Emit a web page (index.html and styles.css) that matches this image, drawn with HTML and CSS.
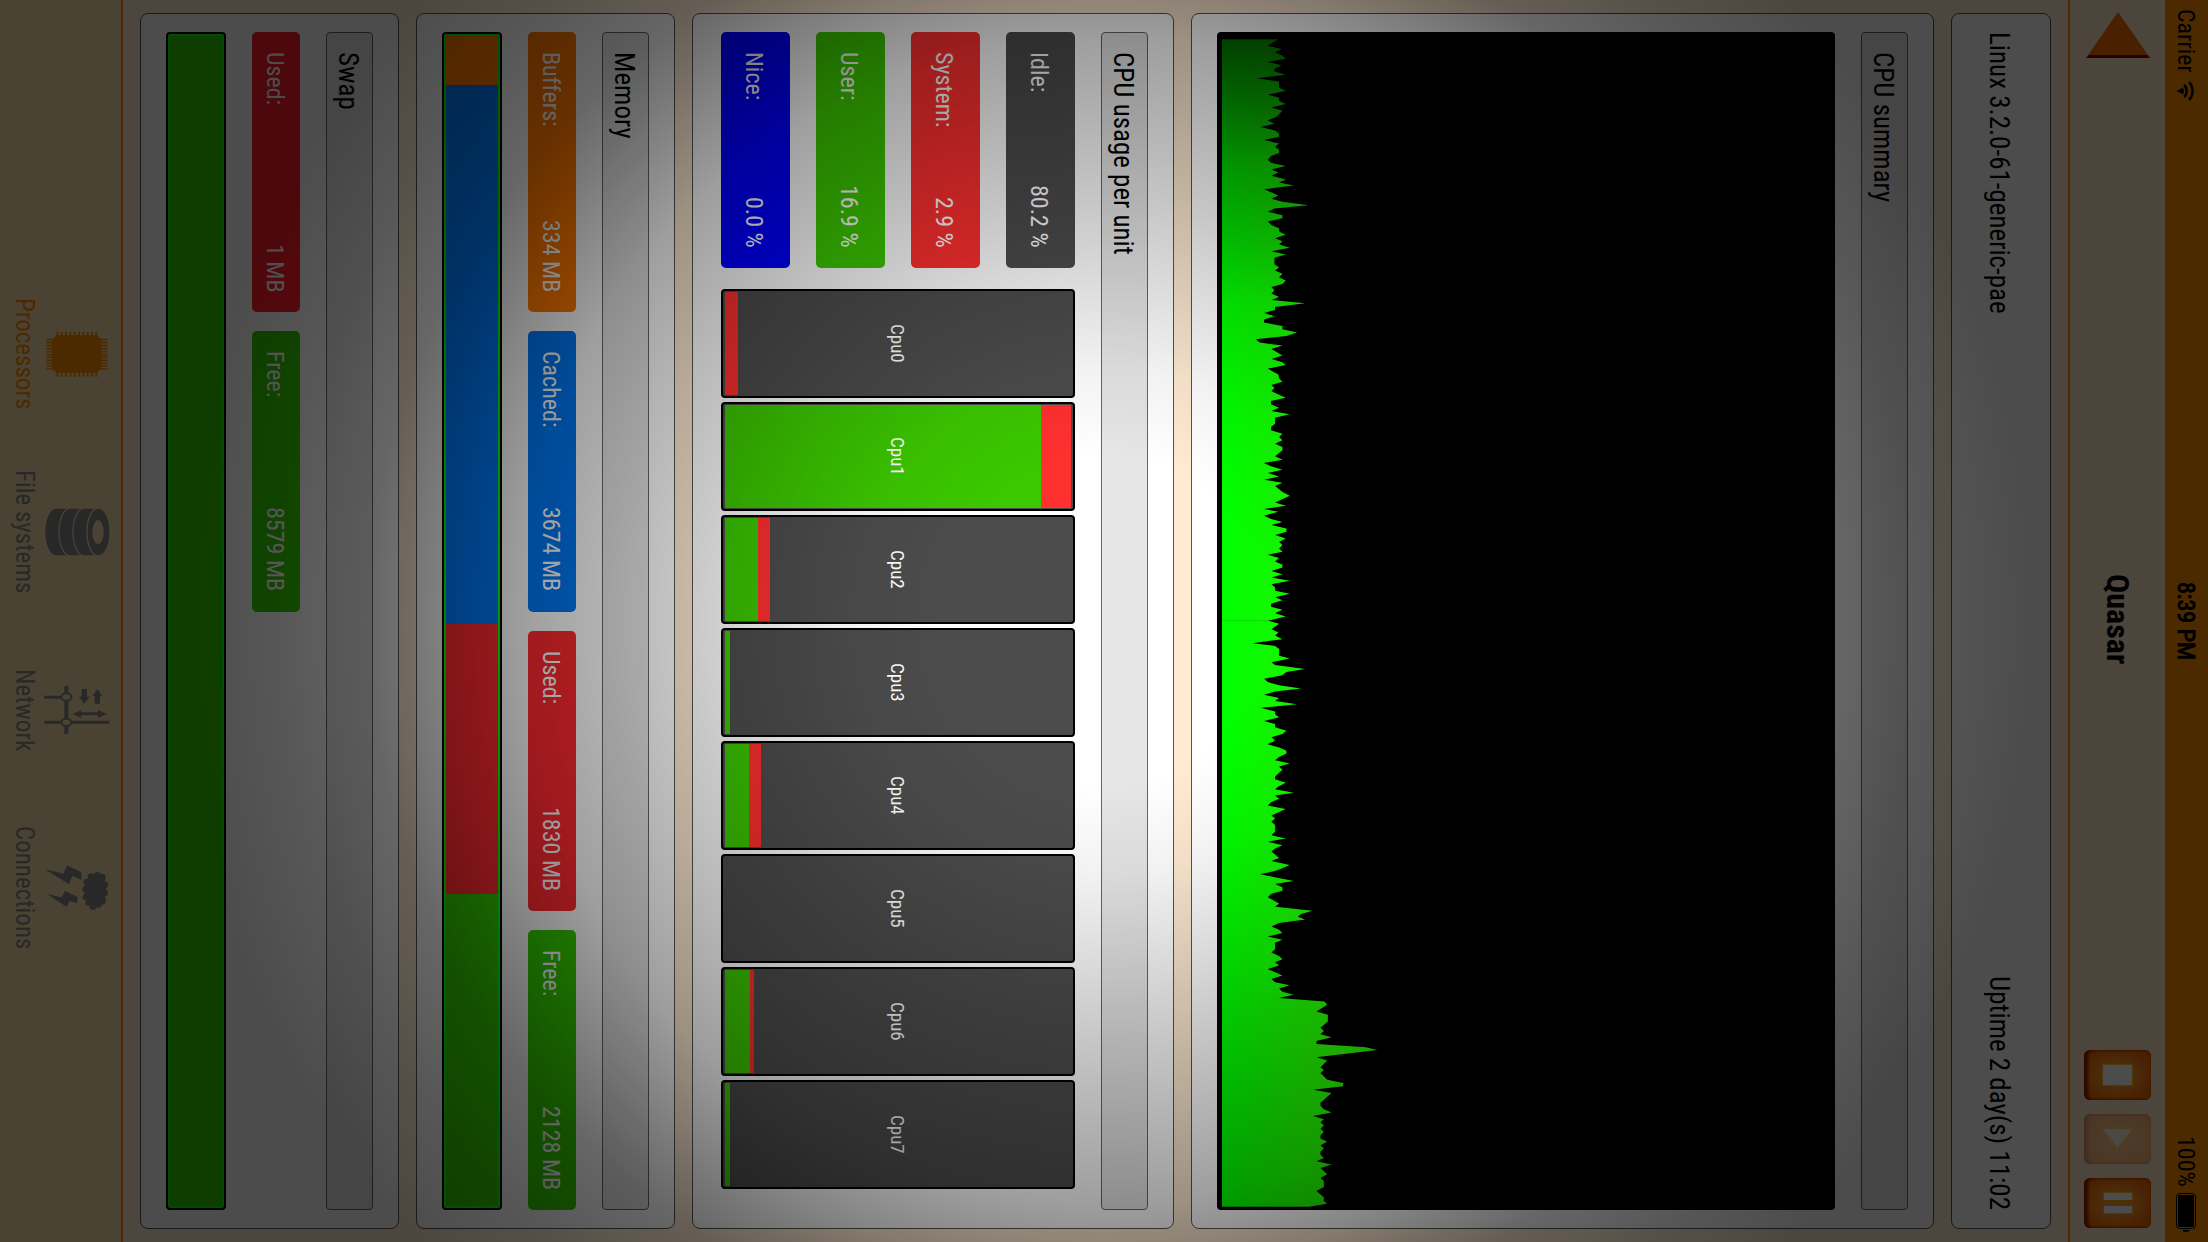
FILE: index.html
```html
<!DOCTYPE html>
<html lang="en">
<head>
<meta charset="utf-8">
<title>Quasar</title>
<link rel="stylesheet" href="styles.css">
</head>
<body>
<header class="statusbar">
  <div class="carrier">
    <span>Carrier</span>
    <svg class="wifi" viewBox="0 0 60 50" preserveAspectRatio="none" aria-hidden="true">
      <path d="M2 25 L20 17 A10 10 0 0 1 20 33 Z" fill="#000"/>
      <path d="M24 10 A18 18 0 0 1 24 40" fill="none" stroke="#000" stroke-width="7"/>
      <path d="M39 3 A28 28 0 0 1 39 47" fill="none" stroke="#000" stroke-width="7"/>
    </svg>
  </div>
  <time class="clock">8:39 PM</time>
  <div class="power">
    <span>100%</span>
    <svg class="battery" viewBox="0 0 20 40" aria-hidden="true">
      <rect x="0.5" y="0.5" width="19" height="35" rx="3" fill="none" stroke="#000"/>
      <rect x="2" y="2" width="16" height="32" rx="1"/>
      <path d="M6 37h8q-1 2-4 2t-4-2z"/>
    </svg>
  </div>
</header>

<nav class="navbar">
  <button class="back" type="button" aria-label="Back">
    <svg viewBox="0 0 66 48" aria-hidden="true">
      <path d="M33 1 65 47H1z" fill="#f06a00"/>
      <path d="M33 5 59 44H7z" fill="#f97000"/>
      <path d="M1 47 4 44H62l3 3z" fill="#6b1000"/>
    </svg>
  </button>
  <h1 class="title">Quasar</h1>
  <div class="actions">
    <button class="action" type="button" aria-label="Stop">
      <svg viewBox="0 0 66 49" aria-hidden="true"><path d="M18 14H48V35H18z"/></svg>
    </button>
    <button class="action" type="button" aria-label="Play" disabled>
      <svg viewBox="0 0 66 49" aria-hidden="true"><path d="M17 14H49L33 35z"/></svg>
    </button>
    <button class="action" type="button" aria-label="Pause">
      <svg viewBox="0 0 66 49" aria-hidden="true"><path d="M19 14H48V22H19zM19 27H48V35H19z"/></svg>
    </button>
  </div>
</nav>

<main class="content">
  <section class="panel info">
    <span>Linux 3.2.0-61-generic-pae</span>
    <span>Uptime 2 day(s) 11:02</span>
  </section>

  <section class="panel summary">
    <h2>CPU summary</h2>
    <div class="chart">
      <svg viewBox="54 96 1851 3531" preserveAspectRatio="none" role="img" aria-label="CPU load history">
        <defs>
          <linearGradient id="load" gradientUnits="userSpaceOnUse" x1="69" y1="0" x2="400" y2="0">
            <stop offset="0" stop-color="#00ff00"/>
            <stop offset="1" stop-color="#28f000"/>
          </linearGradient>
          <linearGradient id="fade" gradientUnits="userSpaceOnUse" x1="0" y1="96" x2="0" y2="900">
            <stop offset="0" stop-color="#000" stop-opacity="0.6"/>
            <stop offset="0.5" stop-color="#000" stop-opacity="0.2"/>
            <stop offset="1" stop-color="#000" stop-opacity="0"/>
          </linearGradient>
        </defs>
        <g fill="url(#load)">
          <polygon points="69,118 238,118 206,137 248,147 228,157 250,167 260,176 206,186 248,196 226,206 226,214 260,224 172,235 240,244 240,263 260,272 206,284 240,293 240,303 260,312 217,322 250,332 232,350 206,361 226,371 184,381 228,391 240,401 240,410 195,420 240,430 228,440 240,450 240,459 216,468 206,478 216,488 260,498 217,508 238,517 217,527 260,538 240,547 284,556 195,567 238,586 217,596 250,605 328,615 226,625 206,635 250,645 250,654 206,664 218,675 240,684 240,694 260,704 228,714 250,723 240,733 272,743 217,753 260,763 226,773 226,792 240,802 228,811 250,821 240,831 260,841 250,851 217,860 226,870 217,880 240,890 217,899 318,909 228,920 228,929 195,938 226,948 195,958 195,967 250,977 250,987 294,997 262,1007 170,1017 182,1027 250,1036 217,1046 250,1066 217,1076 250,1086 260,1094 206,1105 238,1123 240,1134 250,1144 217,1154 226,1163 217,1173 260,1192 216,1202 216,1212 240,1222 217,1232 272,1242 228,1252 228,1270 216,1280 216,1290 250,1300 240,1310 250,1320 228,1330 250,1340 250,1350 228,1368 250,1378 194,1388 216,1398 250,1408 206,1418 240,1428 195,1438 250,1447 228,1457 250,1475 272,1486 228,1506 260,1516 195,1526 238,1534 195,1546 216,1556 250,1565 217,1574 262,1584 262,1594 228,1604 260,1614 240,1624 250,1634 240,1644 250,1654 206,1663 240,1673 228,1683 250,1693 250,1701 217,1712 250,1721 217,1731 272,1741 217,1751 228,1761 228,1771 272,1780 228,1790 250,1799 216,1810 216,1819 250,1828 228,1838 260,1848 206,1861 69,1861"/>
          <polygon transform="translate(0 1860) scale(1 1.19)" points="69,0 206,0 240,8 217,22 238,30 228,38 250,47 160,57 228,64 240,72 240,89 272,96 217,105 228,112 318,122 262,130 250,138 195,147 206,155 240,163 306,171 228,179 195,187 240,195 228,203 294,211 184,220 228,229 228,236 240,244 195,253 228,261 228,269 262,278 250,286 217,294 228,302 206,312 240,320 262,328 262,335 240,344 228,352 272,360 240,368 250,376 228,393 228,400 260,409 238,418 228,425 284,434 228,441 240,449 216,458 206,466 260,475 217,491 228,499 217,507 228,515 228,532 217,541 260,549 206,557 250,566 228,574 217,582 240,598 217,606 272,616 250,624 228,631 182,639 284,656 228,664 250,672 250,681 217,688 206,697 240,713 228,721 340,731 306,739 296,746 318,753 240,762 217,771 240,779 250,787 206,796 250,804 228,812 228,828 217,836 240,845 250,853 228,861 240,869 206,878 250,894 217,903 228,911 272,919 240,927 250,935 284,943 240,951 376,960 384,968 352,985 386,993 386,1010 364,1026 374,1034 364,1042 397,1050 352,1059 352,1067 500,1075 534,1082 352,1100 384,1108 364,1125 374,1132 364,1140 384,1157 432,1165 432,1173 342,1182 397,1190 364,1215 364,1222 374,1231 397,1239 342,1248 374,1256 364,1264 374,1272 364,1280 374,1288 364,1297 364,1305 384,1313 364,1322 374,1330 364,1338 364,1346 374,1354 352,1362 397,1370 364,1379 384,1395 364,1404 374,1412 374,1427 352,1437 374,1453 374,1462 384,1469 330,1477 69,1477"/>
        </g>
        <rect x="69" y="96" width="400" height="804" fill="url(#fade)"/>
      </svg>
    </div>
  </section>

  <section class="panel usage">
    <h2>CPU usage per unit</h2>
    <div class="units">
      <dl class="legend">
        <div class="badge idle"><dt>Idle:</dt><dd>80.2 %</dd></div>
        <div class="badge system"><dt>System:</dt><dd>2.9 %</dd></div>
        <div class="badge user"><dt>User:</dt><dd>16.9 %</dd></div>
        <div class="badge nice"><dt>Nice:</dt><dd>0.0 %</dd></div>
      </dl>
      <div class="cpus">
        <div class="cpu"><i class="system" style="width:3.9%"></i><span>Cpu0</span></div>
        <div class="cpu"><i class="user" style="width:91.3%"></i><i class="system" style="width:8.7%"></i><span>Cpu1</span></div>
        <div class="cpu"><i class="user" style="width:9.6%"></i><i class="system" style="width:3.4%"></i><span>Cpu2</span></div>
        <div class="cpu"><i class="user" style="width:1.4%"></i><span>Cpu3</span></div>
        <div class="cpu"><i class="user" style="width:6.9%"></i><i class="system" style="width:3.5%"></i><span>Cpu4</span></div>
        <div class="cpu"><span>Cpu5</span></div>
        <div class="cpu"><i class="user" style="width:7.3%"></i><i class="system" style="width:1%"></i><span>Cpu6</span></div>
        <div class="cpu"><i class="user" style="width:1.4%"></i><span>Cpu7</span></div>
      </div>
    </div>
  </section>

  <section class="panel memory">
    <h2>Memory</h2>
    <dl class="badges">
      <div class="badge buffers"><dt>Buffers:</dt><dd>334 MB</dd></div>
      <div class="badge cached"><dt>Cached:</dt><dd>3674 MB</dd></div>
      <div class="badge used"><dt>Used:</dt><dd>1830 MB</dd></div>
      <div class="badge free"><dt>Free:</dt><dd>2128 MB</dd></div>
    </dl>
    <div class="bar">
      <i class="buffers" style="height:4.2%"></i>
      <i class="cached" style="height:46.1%"></i>
      <i class="used" style="height:23%"></i>
      <i class="free" style="height:26.7%"></i>
    </div>
  </section>

  <section class="panel swap">
    <h2>Swap</h2>
    <dl class="badges">
      <div class="badge used"><dt>Used:</dt><dd>1 MB</dd></div>
      <div class="badge free"><dt>Free:</dt><dd>8579 MB</dd></div>
    </dl>
    <div class="bar">
      <i class="free" style="height:100%"></i>
    </div>
  </section>
</main>

<nav class="tabbar">
  <a class="tab active" href="#processors">
    <svg viewBox="131 238 198 144" aria-hidden="true">
      <path d="M168 254H290L303 267V353L290 366H168L155 353V267z"/>
      <path d="M171 243V378M184 243V378M197 243V378M210 243V378M223 243V378M236 243V378M249 243V378M262 243V378M275 243V378M288 243V378" fill="none" stroke="currentColor" stroke-width="6"/>
      <path d="M138 267H321M138 276H321M138 285H321M138 294H321M138 303H321M138 312H321M138 320H321M138 329H321M138 338H321M138 346H321M138 355H321" fill="none" stroke="currentColor" stroke-width="5"/>
    </svg>
    <span>Processors</span>
  </a>
  <a class="tab" href="#filesystems">
    <svg viewBox="131 775 198 144" aria-hidden="true">
      <path d="M168 777H294A33 70 0 0 1 294 917H168A33 70 0 0 1 168 777z"/>
      <g fill="none" stroke="#f8dca8" stroke-width="4">
        <path d="M208 776A32 71 0 0 0 208 918M250 776A32 71 0 0 0 250 918M292 776A32 71 0 0 0 292 918"/>
      </g>
      <ellipse cx="293" cy="847" rx="17" ry="36" fill="#f8dca8"/>
    </svg>
    <span>File systems</span>
  </a>
  <a class="tab" href="#network">
    <svg viewBox="131 258 198 144" aria-hidden="true">
      <path d="M132 292H198M132 367H327" fill="none" stroke="currentColor" stroke-width="9"/>
      <path d="M198 258V402" fill="none" stroke="currentColor" stroke-width="12"/>
      <g fill="#f8dca8" stroke="currentColor" stroke-width="6"><ellipse cx="198" cy="291" rx="15" ry="11"/><ellipse cx="198" cy="367" rx="15" ry="11"/></g>
      <path d="M244 267H260V290H268L252 311 236 290H244zM291 267 306 288H299V311H283V288H276zM217 342 243 330V337H293V330L320 342 293 354V346H243V354z"/>
    </svg>
    <span>Network</span>
  </a>
  <a class="tab" href="#connections">
    <svg viewBox="131 792 198 144" aria-hidden="true">
      <path d="M134 808 189 821 200 796 243 817V840L216 827 206 853zM141 883 184 892 194 873 231 890V909L208 903 198 920z"/>
      <g><ellipse cx="285" cy="872" rx="32" ry="46"/><circle cx="291" cy="826" r="10"/><circle cx="304" cy="833" r="12"/><circle cx="273" cy="831" r="11"/><circle cx="312" cy="854" r="11"/><circle cx="312" cy="878" r="11"/><circle cx="304" cy="901" r="13"/><circle cx="294" cy="912" r="11"/><circle cx="278" cy="919" r="11"/><circle cx="264" cy="908" r="9"/><circle cx="257" cy="891" r="10"/><circle cx="256" cy="868" r="10"/><circle cx="260" cy="847" r="11"/></g>
    </svg>
    <span>Connections</span>
  </a>
</nav>
<div class="vignette"></div>
</body>
</html>
```
FILE: styles.css
```css
*, *::before, *::after { box-sizing: border-box; }

/* The whole interface reads top to bottom, with blocks stacked from right to left. */
html {
  writing-mode: vertical-rl;
  height: 100%;
}

body {
  margin: 0;
  width: 100vw;
  height: 100vh;
  overflow: hidden;
  display: flex;
  flex-direction: column;
  background: #ffebd3;
  color: #000;
  font-family: "Liberation Sans Narrow", "Roboto Condensed", "Liberation Sans", sans-serif;
  font-size: 27px;
  line-height: 32px;
}

h1, h2, dl, dd { margin: 0; font-weight: 400; }
h2 { font-size: 27px; }
svg { display: block; }
i { display: block; }

button {
  appearance: none;
  border: 0;
  padding: 0;
  background: none;
}

.statusbar {
  width: 43px;
  flex: none;
  display: grid;
  grid-template-columns: 1fr auto 1fr;
  align-items: center;
  padding: 9px 1px 9px 0;
  background: #ff8c00;
  font-size: 24px;
}
.carrier { display: flex; align-items: center; gap: 8px; }
.clock { -webkit-text-stroke: 1px #000; }
.power { display: flex; align-items: center; justify-content: flex-end; gap: 6px; }
.wifi { width: 20px; height: 20px; }
.battery { width: 20px; height: 40px; }

.navbar {
  width: 97px;
  flex: none;
  display: grid;
  grid-template-columns: 1fr auto 1fr;
  align-items: center;
  padding: 11px 0 14px;
  border-left: 2px solid #ff8c00;
  background: #ffe6c8;
}
.back { justify-self: start; width: 66px; height: 48px; }
.title { font-size: 32px; font-weight: 700; }
.actions { display: flex; justify-content: flex-end; gap: 14px; }
.action {
  width: 67px;
  height: 50px;
  border-radius: 6px;
  background: radial-gradient(ellipse, #ff9a30 25%, #f06a00 80%);
  box-shadow: inset 4px 0 3px #8c1c00, inset 0 0 3px #b43c00;
}
.action svg { width: 100%; height: 100%; fill: #fff; stroke: #ffa800; stroke-width: 1; }
.action:disabled { opacity: 0.4; }
.action:disabled svg { stroke-width: 2; }

.content {
  flex: 1;
  min-width: 0;
  display: flex;
  flex-direction: column;
  gap: 17px;
  padding: 13px 17px;
}

.panel {
  flex: none;
  display: flex;
  flex-direction: column;
  gap: 26px;
  padding: 18px 25px;
  border: 1px solid #555;
  border-radius: 8px;
  background: #fff;
}
.info {
  width: 100px;
  flex-direction: row;
  justify-content: space-between;
  align-items: center;
  padding: 18px 27px 18px 23px;
}
.summary { flex: 1; min-width: 0; }

.panel h2 {
  width: 47px;
  padding: 19px 3px 19px 0;
  line-height: 42px;
  border: 1px solid #666;
  border-radius: 4px;
  background: #e6e6e6;
}

.chart {
  flex: 1;
  min-width: 0;
  border-radius: 4px;
  background: #000;
  overflow: hidden;
}
.chart svg { width: 100%; height: 100%; }

.usage { padding-left: 28px; }
.units { display: flex; gap: 21px; }
.legend { display: flex; flex-direction: column; gap: 26px; height: 236px; }
.badge {
  display: flex;
  flex: 1;
  justify-content: space-between;
  align-items: center;
  padding: 20px 3px 20px 0;
  border-radius: 5px;
  color: #fff;
  font-size: 24px;
}
.legend .badge { flex: none; width: 69px; }
.badges { display: grid; grid-template-columns: repeat(4, 1fr); gap: 19px; width: 48px; }

.idle { background: #4c4c4c; }
.system { background: #ff3030; }
.user { background: #3cc800; }
.nice { background: #0000ff; }
.buffers { background: #ff7800; }
.cached { background: #0078f5; }
.used { background: #ff2a30; }
.free { background: #32c800; }
.swap .used { background: #ff1c28; }

.cpus { flex: 1; display: flex; gap: 4px; padding-bottom: 21px; }
.cpu {
  position: relative;
  flex: 1;
  display: flex;
  flex-direction: column-reverse;
  justify-content: flex-start;
  padding: 1px 2px;
  border: 2px solid #000;
  border-radius: 4px;
  background: #4c4c4c;
}
.cpu span {
  position: absolute;
  inset: 0;
  display: flex;
  align-items: center;
  justify-content: center;
  padding-right: 3px;
  color: #fff;
  font-size: 19px;
}

.bar {
  width: 60px;
  display: flex;
  padding: 2px;
  border: 2px solid #000;
  border-radius: 4px;
  background: #00ff00;
}

.tabbar {
  width: 123px;
  flex: none;
  display: flex;
  justify-content: center;
  border-right: 2px solid #ff8c00;
  background: #f8dca8;
}
.tab {
  height: 178px;
  display: flex;
  flex-direction: column;
  align-items: center;
  gap: 4px;
  padding-right: 11px;
  color: #888;
  font-size: 25px;
  text-decoration: none;
}
.tab svg { width: 66px; height: 48px; fill: currentColor; }
.tab.active { color: #ff8c00; }

.vignette {
  position: fixed;
  inset: 0;
  pointer-events: none;
  background: radial-gradient(circle farthest-corner at center,
    rgba(0, 0, 0, 0) 13%,
    rgba(0, 0, 0, 0.05) 20%,
    rgba(0, 0, 0, 0.22) 33%,
    rgba(0, 0, 0, 0.38) 46%,
    rgba(0, 0, 0, 0.53) 54%,
    rgba(0, 0, 0, 0.6) 58%,
    rgba(0, 0, 0, 0.66) 65%,
    rgba(0, 0, 0, 0.7) 73%);
}
```
